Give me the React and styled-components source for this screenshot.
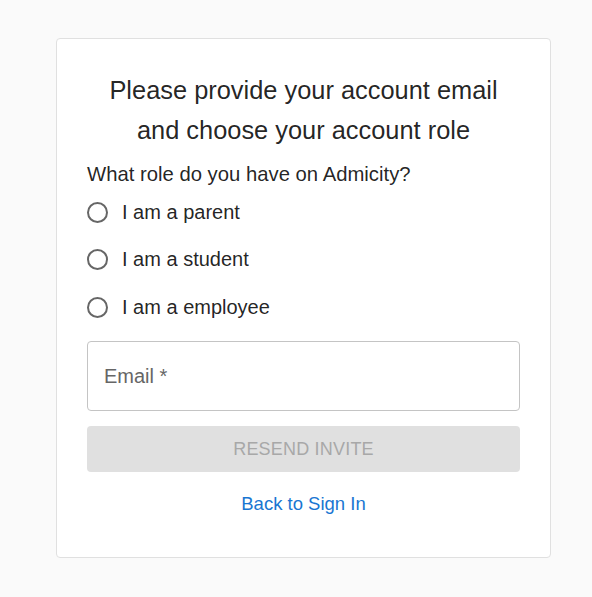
import React, { useState } from "react";
import styled, { createGlobalStyle } from "styled-components";

const GlobalStyle = createGlobalStyle`
  html, body {
    margin: 0;
    padding: 0;
    background: #fafafa;
    font-family: "Liberation Sans", Arial, sans-serif;
    color: rgba(0, 0, 0, 0.87);
  }
`;

const Page = styled.div`
  padding: 38px 41px 40px 56px;
`;

const Card = styled.form`
  box-sizing: border-box;
  width: 495px;
  background: #fff;
  border: 1px solid #e0e0e0;
  border-radius: 4px;
  padding: 31px 30px 41px 30px;
  display: flex;
  flex-direction: column;
`;

const Title = styled.h2`
  margin: 0;
  font-size: 25.4px;
  font-weight: 400;
  line-height: 40px;
  text-align: center;
`;

const Question = styled.div`
  margin-top: 12px;
  font-size: 20.3px;
  line-height: 24px;
`;

const RadioGroup = styled.div`
  margin-top: 2.5px;
  display: flex;
  flex-direction: column;
`;

const RadioRow = styled.label`
  height: 47.5px;
  display: flex;
  align-items: center;
  gap: 14px;
  font-size: 20px;
  cursor: pointer;
`;

const Circle = styled.span`
  box-sizing: border-box;
  width: 21px;
  height: 21px;
  border-radius: 50%;
  border: 2px solid ${(p) => (p.$checked ? "#1976d2" : "#666")};
  display: flex;
  align-items: center;
  justify-content: center;
  &::after {
    content: "";
    width: 10px;
    height: 10px;
    border-radius: 50%;
    background: #1976d2;
    display: ${(p) => (p.$checked ? "block" : "none")};
  }
`;

const HiddenInput = styled.input`
  display: none;
`;

const EmailInput = styled.input`
  box-sizing: border-box;
  margin-top: 10px;
  width: 100%;
  height: 70px;
  border: 1px solid #c4c4c4;
  border-radius: 4px;
  padding: 0 16px;
  font-family: inherit;
  font-size: 20px;
  color: rgba(0, 0, 0, 0.87);
  outline: none;
  &::placeholder {
    color: #666;
  }
`;

const SubmitButton = styled.button`
  margin-top: 15px;
  height: 46px;
  border: none;
  border-radius: 4px;
  background: #e0e0e0;
  color: #a8a8a8;
  font-family: inherit;
  font-size: 18px;
  letter-spacing: 0.2px;
  text-transform: uppercase;
`;

const BackLink = styled.a`
  margin-top: 20px;
  align-self: center;
  font-size: 18.5px;
  line-height: 24px;
  color: #1976d2;
  text-decoration: none;
`;

const roles = [
  { id: "parent", label: "I am a parent" },
  { id: "student", label: "I am a student" },
  { id: "employee", label: "I am a employee" },
];

export default function App() {
  const [role, setRole] = useState("");
  const [email, setEmail] = useState("");

  return (
    <>
      <GlobalStyle />
      <Page>
        <Card onSubmit={(e) => e.preventDefault()}>
          <Title>
            Please provide your account email
            <br />
            and choose your account role
          </Title>
          <Question>What role do you have on Admicity?</Question>
          <RadioGroup>
            {roles.map((r) => (
              <RadioRow key={r.id}>
                <HiddenInput
                  type="radio"
                  name="role"
                  value={r.id}
                  checked={role === r.id}
                  onChange={() => setRole(r.id)}
                />
                <Circle $checked={role === r.id} />
                {r.label}
              </RadioRow>
            ))}
          </RadioGroup>
          <EmailInput
            placeholder="Email *"
            value={email}
            onChange={(e) => setEmail(e.target.value)}
          />
          <SubmitButton type="submit" disabled={!role || !email}>
            Resend Invite
          </SubmitButton>
          <BackLink href="#">Back to Sign In</BackLink>
        </Card>
      </Page>
    </>
  );
}
